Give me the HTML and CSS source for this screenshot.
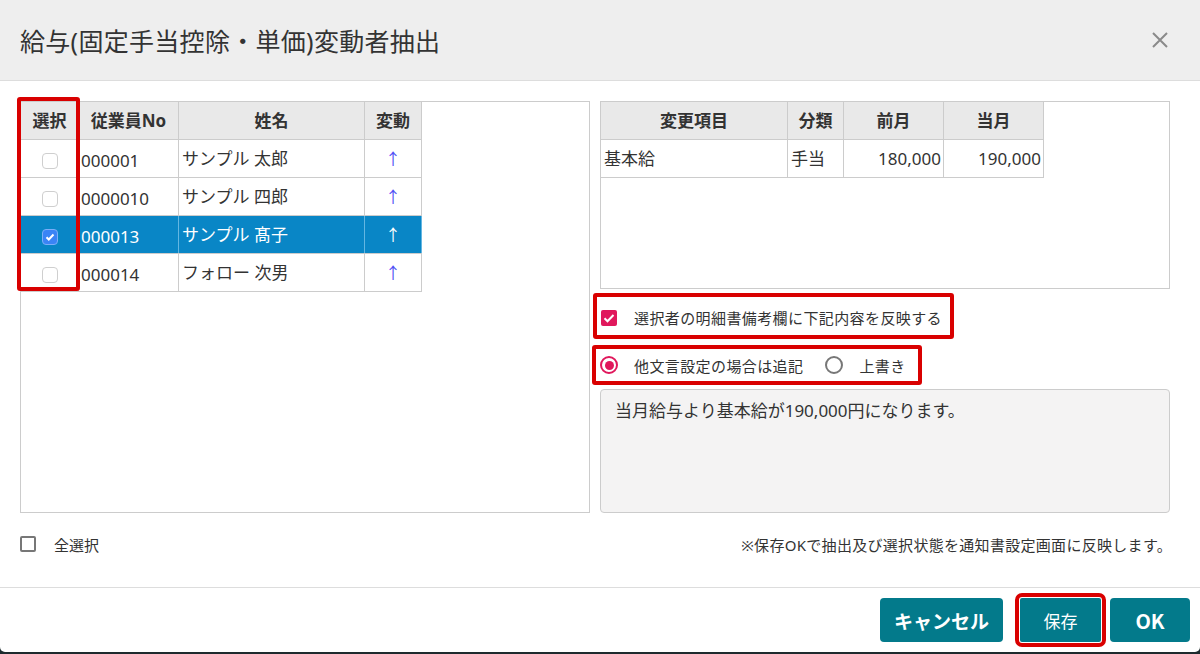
FILE: index.html
```html
<!DOCTYPE html>
<html lang="ja">
<head>
  <meta charset="UTF-8">
  <meta name="viewport" content="width=device-width, initial-scale=1.0">
  <title>給与(固定手当控除・単価)変動者抽出</title>
  <link rel="stylesheet" href="styles.css">
</head>
<body>
<div class="modal">
  <div class="modal-head">
    <div class="modal-title">給与(固定手当控除・単価)変動者抽出</div>
    <span class="close">
      <svg width="18" height="18" viewBox="0 0 18 18"><path d="M2 2L16 16M16 2L2 16" stroke="#8a8a8a" stroke-width="2"/></svg>
    </span>
  </div>

  <div class="modal-body">
    <div class="cols">
      <div class="emp-box">
        <table class="grid emp">
          <tr>
            <th class="c-sel">選択</th>
            <th class="c-no">従業員No</th>
            <th class="c-name">姓名</th>
            <th class="c-chg">変動</th>
          </tr>
          <tr>
            <td class="c-sel"><span class="cb"></span></td>
            <td class="c-no">000001</td>
            <td>サンプル 太郎</td>
            <td class="c-chg">↑</td>
          </tr>
          <tr>
            <td class="c-sel"><span class="cb"></span></td>
            <td class="c-no">0000010</td>
            <td>サンプル 四郎</td>
            <td class="c-chg">↑</td>
          </tr>
          <tr class="sel">
            <td class="c-sel"><span class="cb on"><svg width="14" height="14" viewBox="0 0 14 14"><path d="M3.5 7.2l2.3 2.3L10.5 4.5" stroke="#fff" stroke-width="2" fill="none"/></svg></span></td>
            <td class="c-no">000013</td>
            <td>サンプル 髙子</td>
            <td class="c-chg">↑</td>
          </tr>
          <tr>
            <td class="c-sel"><span class="cb"></span></td>
            <td class="c-no">000014</td>
            <td>フォロー 次男</td>
            <td class="c-chg">↑</td>
          </tr>
        </table>
        <div class="mark mark-sel"></div>
      </div>

      <div class="right">
        <div class="item-box">
          <table class="grid items">
            <tr>
              <th class="i-name">変更項目</th>
              <th class="i-kind">分類</th>
              <th class="i-prev">前月</th>
              <th class="i-cur">当月</th>
            </tr>
            <tr>
              <td>基本給</td>
              <td>手当</td>
              <td class="num">180,000</td>
              <td class="num">190,000</td>
            </tr>
          </table>
        </div>

        <div class="opt opt-check">
          <span class="pink-cb"><svg width="16" height="16" viewBox="0 0 16 16"><path d="M3.5 8.3l3 3L12.5 5" stroke="#fff" stroke-width="2" fill="none"/></svg></span>
          <span class="opt-text">選択者の明細書備考欄に下記内容を反映する</span>
        </div>

        <div class="opt opt-radio">
          <span class="radio on"></span>
          <span class="opt-text">他文言設定の場合は追記</span>
          <span class="radio"></span>
          <span class="opt-text">上書き</span>
        </div>

        <div class="memo">当月給与より基本給が190,000円になります。</div>
      </div>
    </div>

    <div class="bottom-row">
      <div class="all"><span class="cb-lg"></span>全選択</div>
      <div class="note">※保存OKで抽出及び選択状態を通知書設定画面に反映します。</div>
    </div>
  </div>

  <div class="modal-foot">
    <button class="btn btn-cancel">キャンセル</button>
    <button class="btn btn-save">保存</button>
    <button class="btn btn-ok">OK</button>
  </div>
</div>
</body>
</html>
```

FILE: styles.css
```css
body {
  margin: 0;
  background: #1e2b2e;
  font-family: "Noto Sans", "Noto Sans CJK JP", sans-serif;
  color: #333;
}

.modal {
  width: 1200px;
  height: 652px;
  background: #fff;
  border-radius: 0 0 5px 5px;
  display: flex;
  flex-direction: column;
}

.modal-head {
  height: 81px;
  box-sizing: border-box;
  background: #eeeeee;
  border-bottom: 1px solid #dddddd;
  display: flex;
  align-items: center;
  justify-content: space-between;
  padding: 0 31px 0 20px;
}

.modal-title {
  font-size: 25px;
  letter-spacing: 0.3px;
  color: #333;
}

.close {
  display: flex;
}

.modal-body {
  flex: 1;
  padding: 20px 30px 0 20px;
}

.cols {
  display: flex;
  gap: 10px;
  height: 412px;
}

.emp-box {
  width: 570px;
  border: 1px solid #ccc;
  box-sizing: border-box;
  position: relative;
}

.right {
  width: 570px;
  display: flex;
  flex-direction: column;
}

/* tables */
.grid {
  border-collapse: collapse;
  table-layout: fixed;
  font-size: 17px;
}

.grid th,
.grid td {
  border-right: 1px solid #ccc;
  border-bottom: 1px solid #ccc;
  height: 37px;
  padding: 0 3px;
  white-space: nowrap;
  line-height: 20px;
}

.grid th {
  background: #e9e9e9;
  font-weight: bold;
  text-align: center;
}

.emp {
  width: 400px;
}

.emp .c-sel { width: 57px; text-align: center; padding: 0; }
.emp .c-no { width: 93px; }
.emp .c-name { width: 179px; }
.emp .c-chg { width: 50px; text-align: center; }

.emp td.c-no {
  height: 33px;
  padding: 4px 0 0 2px;
}

.emp td.c-chg {
  color: #5050f5;
  font-size: 16px;
}

.emp tr.sel td {
  background: #0986c6;
  color: #fff;
  border-right-color: #63b6e2;
}

.cb {
  display: inline-flex;
  align-items: center;
  justify-content: center;
  width: 16px;
  height: 16px;
  box-sizing: border-box;
  border: 1px solid #cfcfcf;
  border-radius: 4px;
  background: #fff;
  vertical-align: middle;
  margin-top: 3px;
}

.cb.on {
  background: #3a84f5;
  border-color: #7aaef8;
}

.item-box {
  height: 188px;
  border: 1px solid #ccc;
  box-sizing: border-box;
}

.items .i-name { width: 180px; }
.items .i-kind { width: 49px; }
.items .i-prev { width: 93px; }
.items .i-cur { width: 93px; }

.items td.num {
  text-align: right;
  padding-right: 2px;
}

/* option rows */
.opt {
  display: flex;
  align-items: center;
  border: 4px solid #d90000;
  border-radius: 3px;
  box-sizing: border-box;
  font-size: 15px;
  letter-spacing: 0.4px;
  padding-left: 4px;
}

.opt-check {
  width: 361px;
  height: 46px;
  margin: 4px 0 0 -7px;
  padding-top: 3px;
}

.opt-radio {
  width: 330px;
  height: 40px;
  margin: 6px 0 0 -8px;
}

.pink-cb {
  width: 16px;
  height: 16px;
  border-radius: 2px;
  background: #e0185c;
  display: flex;
  align-items: center;
  justify-content: center;
  margin-right: 17px;
}

.radio {
  width: 18px;
  height: 18px;
  box-sizing: border-box;
  border: 2px solid #777;
  border-radius: 50%;
  margin-right: 16px;
  display: flex;
  align-items: center;
  justify-content: center;
}

.radio.on {
  border-color: #e0185c;
}

.radio.on::after {
  content: "";
  width: 9px;
  height: 9px;
  border-radius: 50%;
  background: #e0185c;
}

.opt-radio .opt-text:nth-of-type(2) {
  margin-right: 22px;
}

.memo {
  margin-top: 4px;
  height: 124px;
  box-sizing: border-box;
  background: #f4f3f3;
  border: 1px solid #ccc;
  border-radius: 4px;
  padding: 8px 14px;
  font-size: 17px;
  line-height: 26px;
}

.mark-sel {
  position: absolute;
  left: -4px;
  top: -5px;
  width: 63px;
  height: 194px;
  border: 4px solid #d90000;
  border-radius: 3px;
  box-sizing: border-box;
}

/* bottom */
.bottom-row {
  display: flex;
  justify-content: space-between;
  align-items: center;
  margin: 21px -2px 0 0;
  height: 20px;
  font-size: 15px;
}

.note {
  letter-spacing: 0.3px;
}

.all {
  display: flex;
  align-items: center;
}

.cb-lg {
  width: 16px;
  height: 16px;
  box-sizing: border-box;
  border: 2px solid #777;
  border-radius: 2px;
  margin-right: 18px;
}

.modal-foot {
  height: 65px;
  box-sizing: border-box;
  border-top: 1px solid #dddddd;
  padding: 10px 10px;
  display: flex;
  justify-content: flex-end;
}

.btn {
  height: 44px;
  border: none;
  border-radius: 4px;
  background: #037a8b;
  color: #fff;
  font-family: "Noto Sans CJK JP", sans-serif;
  font-weight: bold;
  font-size: 19px;
  padding: 0;
}

.btn-cancel { width: 123px; }

.btn-save {
  width: 81px;
  margin-left: 17px;
  font-weight: normal;
  font-size: 17px;
  border-radius: 2px;
  outline: 4px solid #d90000;
  outline-offset: 1px;
}

.btn-ok {
  width: 80px;
  margin-left: 9px;
  font-size: 20px;
}
```
